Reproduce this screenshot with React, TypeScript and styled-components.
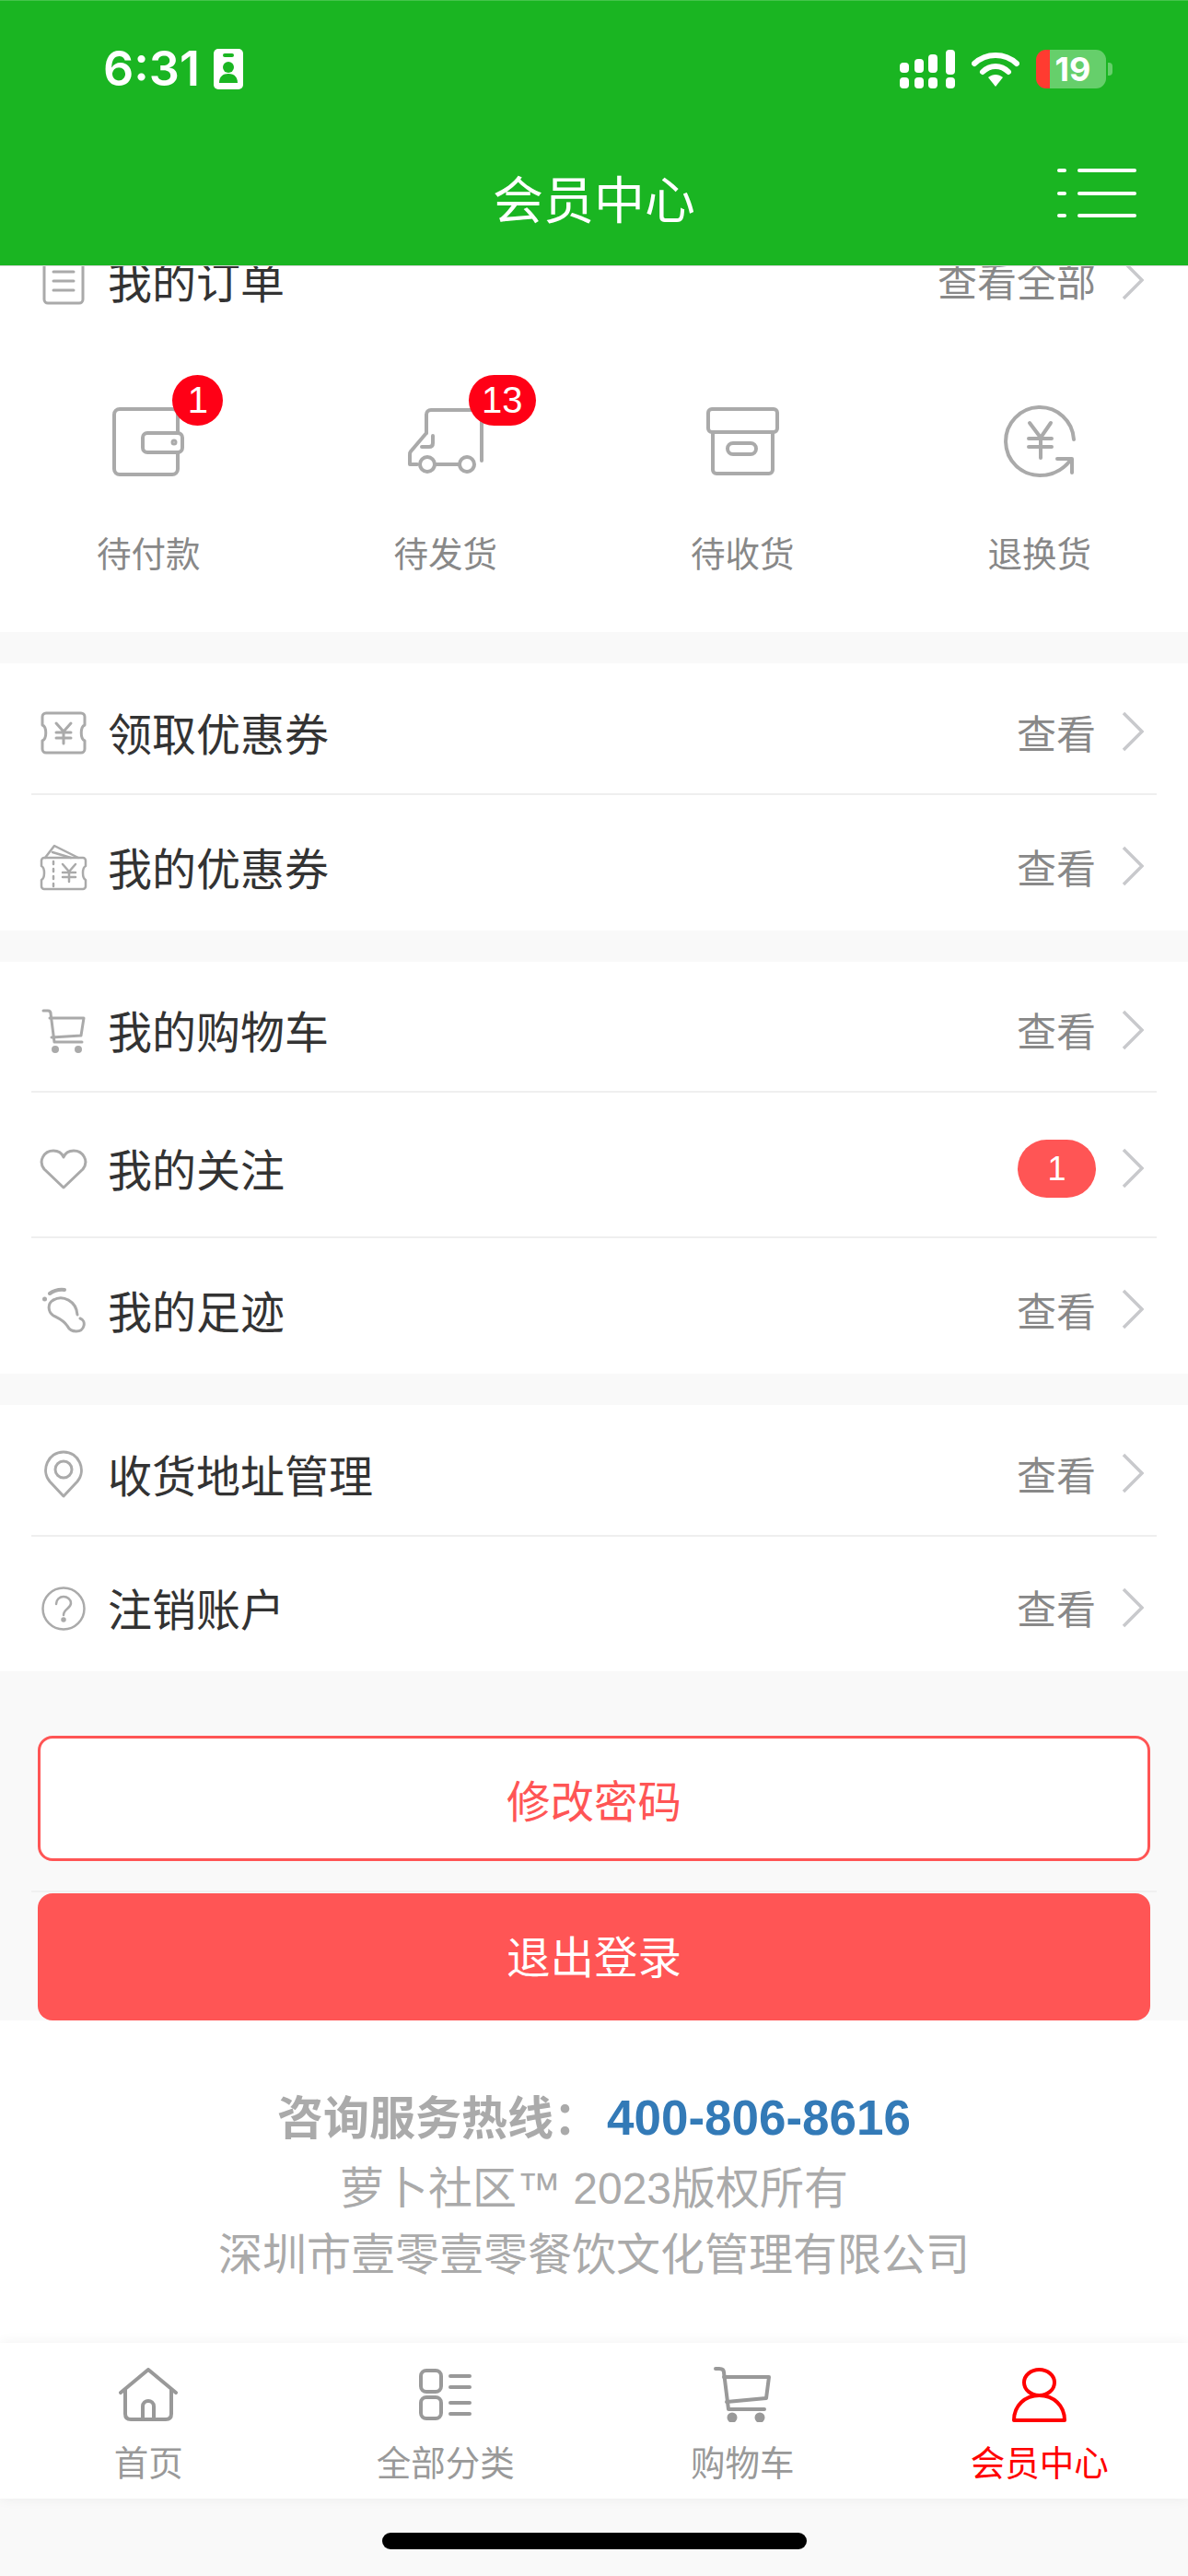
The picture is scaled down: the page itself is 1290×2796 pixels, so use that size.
import React from "react";
import styled, { createGlobalStyle } from "styled-components";

const GlobalStyle = createGlobalStyle`
    html, body {
        margin: 0;
        padding: 0;
        background: #f9f9f9;
    }
    * {
        box-sizing: border-box;
    }
    body {
        font-family: "Liberation Sans", "Noto Sans CJK SC", sans-serif;
    }
`;

const Page = styled.div`
    width: 1290px;
    height: 2796px;
    display: flex;
    flex-direction: column;
    overflow: hidden;
    background: #f9f9f9;
`;

const Header = styled.header`
    position: relative;
    z-index: 2;
    height: 289px;
    flex: none;
    background: #1ab522;
    border-top: 1px solid #45c44c;
    border-bottom: 1px solid #d8d8d8;
    color: #fff;
`;

const StatusBar = styled.div`
    height: 145px;
    padding: 52px 82px 0 112px;
    display: flex;
    align-items: flex-start;
    justify-content: space-between;
`;

const StatusLeft = styled.div`
    display: flex;
    align-items: center;
    gap: 15px;
    height: 44px;
`;

const Time = styled.span`
    font-family: Inter, sans-serif;
    font-weight: 600;
    font-size: 52px;
    line-height: 44px;
`;

const StatusRight = styled.div`
    display: flex;
    align-items: center;
    height: 44px;
    gap: 18px;
`;

const Battery = styled.div`
    width: 76px;
    height: 42px;
    border-radius: 11px;
    display: flex;
    align-items: center;
    justify-content: center;
    padding-left: 4px;
    font-family: Inter, sans-serif;
    font-weight: 700;
    font-size: 36px;
    background: linear-gradient(90deg, #ff3b30 0, #ff3b30 15px, #66cf6b 15px, #66cf6b 100%);
`;

const BatteryWrap = styled.div`
    display: flex;
    align-items: center;
    gap: 2px;
`;

const BatteryCap = styled.div`
    width: 5px;
    height: 14px;
    border-radius: 0 4px 4px 0;
    background: #66cf6b;
`;

const TitleBar = styled.div`
    height: 142px;
    padding: 0 56px;
    display: grid;
    grid-template-columns: 1fr auto 1fr;
    align-items: center;
`;

const Title = styled.h1`
    grid-column: 2;
    margin: 0;
    font-family: "Noto Sans CJK SC", sans-serif;
    font-weight: 400;
    font-size: 55px;
    line-height: 70px;
    margin-top: -8px;
`;

const MenuButton = styled.div`
    justify-self: end;
    display: flex;
    margin-top: -14px;
`;

const Main = styled.main`
    flex: 1;
    min-height: 0;
    display: flex;
    flex-direction: column;
`;

const Section = styled.section`
    background: #fff;
    padding: 0 34px;
    margin-bottom: 34px;
`;

const OrderSection = styled(Section)`
    margin-top: -60px;
`;

const RowWrap = styled.div<{ $h: number; $line?: boolean }>`
    height: ${(p) => p.$h}px;
    padding: 9px 14px 0 9px;
    display: flex;
    align-items: center;
    border-bottom: ${(p) => (p.$line ? "2px solid #efefef" : "none")};
`;

const RowIcon = styled.div`
    width: 52px;
    height: 52px;
    flex: none;
    display: flex;
    align-items: center;
    justify-content: center;
    margin-right: 22px;
`;

const RowLabel = styled.span`
    flex: 1;
    font-family: "Noto Sans CJK SC", sans-serif;
    font-size: 48px;
    line-height: 60px;
    color: #333;
    margin-top: -3px;
`;

const RowValue = styled.span`
    font-family: "Noto Sans CJK SC", sans-serif;
    font-size: 43px;
    line-height: 60px;
    color: #888;
    margin-top: -3px;
`;

const Pill = styled.span`
    width: 85px;
    height: 63px;
    border-radius: 32px;
    background: #ff5555;
    color: #fff;
    font-size: 36px;
    display: flex;
    align-items: center;
    justify-content: center;
`;

const Chevron = styled.svg`
    flex: none;
    margin-left: 28px;
    margin-top: -2px;
`;

const Tabs = styled.div`
    display: grid;
    grid-template-columns: repeat(4, 1fr);
    margin: 0 -34px;
    padding: 65px 0 62px;
`;

const Tab = styled.div`
    display: flex;
    flex-direction: column;
    align-items: center;
    gap: 52px;
`;

const TabIcon = styled.div`
    position: relative;
    height: 86px;
    display: flex;
    align-items: center;
    justify-content: center;
`;

const Badge = styled.span<{ $wide?: boolean }>`
    position: absolute;
    top: -29px;
    left: ${(p) => (p.$wide ? "66px" : "65px")};
    min-width: ${(p) => (p.$wide ? "73px" : "55px")};
    height: 55px;
    border-radius: 28px;
    background: #ff0016;
    color: #fff;
    font-size: 40px;
    display: flex;
    align-items: center;
    justify-content: center;
`;

const TabLabel = styled.span`
    font-family: "Noto Sans CJK SC", sans-serif;
    font-size: 37.5px;
    line-height: 50px;
    color: #888;
`;

const Actions = styled.div`
    flex: none;
    height: 379px;
    margin-top: -34px;
    padding: 70px 41px 0;
    display: flex;
    flex-direction: column;
`;

const OutlineButton = styled.div`
    height: 136px;
    border: 3px solid #ff5555;
    border-radius: 16px;
    background: #fff;
    color: #ff5555;
    font-family: "Noto Sans CJK SC", sans-serif;
    font-size: 47.5px;
    display: flex;
    align-items: center;
    justify-content: center;
`;

const ActionLine = styled.div`
    height: 2px;
    margin: 32px -7px 1px;
    background: #f0f0f0;
`;

const SolidButton = styled(OutlineButton)`
    height: 138px;
    border: none;
    padding-bottom: 6px;
    background: #ff5555;
    color: #fff;
`;

const Footer = styled.div`
    flex: 1;
    background: #fff;
    padding-top: 68px;
    text-align: center;
    color: #aaa;
    font-family: "Liberation Sans", "Noto Sans CJK SC", sans-serif;
    font-size: 48px;
`;

const Hotline = styled.div`
    font-family: "Noto Sans CJK SC", sans-serif;
    font-size: 50px;
    font-weight: 700;
    line-height: 68px;
    height: 68px;
    margin-bottom: 11px;
`;

const Phone = styled.span`
    font-family: "Liberation Sans", sans-serif;
    font-size: 53px;
    color: #337ab7;
    margin-left: 8px;
`;

const FooterLine = styled.div`
    line-height: 72px;
    height: 72px;
`;

const BottomNav = styled.nav`
    flex: none;
    height: 169px;
    background: #fff;
    display: grid;
    grid-template-columns: repeat(4, 1fr);
    box-shadow: 0 0 14px rgba(0, 0, 0, 0.06);
    padding-top: 25px;
`;

const NavItem = styled.div<{ $active?: boolean }>`
    display: flex;
    flex-direction: column;
    align-items: center;
    color: ${(p) => (p.$active ? "#ff0000" : "#999")};
`;

const NavIcon = styled.div`
    height: 62px;
    display: flex;
    align-items: center;
    justify-content: center;
`;

const NavLabel = styled.span`
    font-family: "Noto Sans CJK SC", sans-serif;
    font-size: 37.5px;
    line-height: 50px;
    margin-top: 16px;
`;

const HomeArea = styled.div`
    flex: none;
    height: 84px;
    padding-top: 37px;
    display: flex;
    justify-content: center;
`;

const HomeBar = styled.div`
    width: 461px;
    height: 18px;
    border-radius: 9px;
    background: #000;
`;

const gray = { fill: "none", stroke: "#aaa", strokeLinecap: "round", strokeLinejoin: "round" } as const;

const ContactIcon = () => (
    <svg width="32" height="44" viewBox="0 0 32 44">
        <rect width="32" height="44" rx="5" fill="#fff" />
        <rect x="10" y="5" width="12" height="4" rx="2" fill="#1ab522" />
        <circle cx="16" cy="20" r="6" fill="#1ab522" />
        <path d="M6 37c0-7 4-10 10-10s10 3 10 10z" fill="#1ab522" />
    </svg>
);

const SignalIcon = () => (
    <svg width="60" height="42" viewBox="0 0 60 42" fill="#fff">
        <rect x="0" y="14" width="10" height="11" rx="4" />
        <rect x="16" y="10" width="10" height="15" rx="4" />
        <rect x="31" y="5" width="10" height="20" rx="4" />
        <rect x="50" y="0" width="10" height="27" rx="4" />
        <rect x="0" y="30" width="10" height="12" rx="4" />
        <rect x="16" y="30" width="10" height="12" rx="4" />
        <rect x="31" y="30" width="10" height="12" rx="4" />
        <rect x="50" y="30" width="10" height="12" rx="4" />
    </svg>
);

const WifiIcon = () => (
    <svg width="52" height="38" viewBox="0 0 52 38">
        <path d="M3 13C16 1 36 1 49 13" fill="none" stroke="#fff" strokeWidth="6" strokeLinecap="round" />
        <path d="M12 22C20 14 32 14 40 22" fill="none" stroke="#fff" strokeWidth="6" strokeLinecap="round" />
        <path d="M18 28c5-4 11-4 16 0L26 38z" fill="#fff" />
    </svg>
);

const MenuIcon = () => (
    <svg width="86" height="54" viewBox="0 0 86 54" fill="#fff">
        <rect x="0" y="0" width="10" height="4" rx="2" />
        <rect x="22" y="0" width="64" height="4" rx="2" />
        <rect x="0" y="25" width="10" height="4" rx="2" />
        <rect x="22" y="25" width="64" height="4" rx="2" />
        <rect x="0" y="49" width="10" height="4" rx="2" />
        <rect x="22" y="49" width="64" height="4" rx="2" />
    </svg>
);

const ArrowRight = () => (
    <Chevron width="24" height="44" viewBox="0 0 24 44">
        <path d="M2 2l20 20L2 42" fill="none" stroke="#c8c9cc" strokeWidth="3.5" />
    </Chevron>
);

const OrderListIcon = () => (
    <svg width="46" height="52" viewBox="0 0 46 52" {...gray} strokeWidth="3">
        <rect x="2" y="2" width="42" height="48" rx="4" />
        <path d="M12 16h22M12 26h22M12 36h22" />
    </svg>
);

const TicketIcon = () => (
    <svg width="50" height="47" viewBox="0 0 50 47" {...gray} strokeWidth="3">
        <path d="M6 2h38a4 4 0 0 1 4 4v9c-5 2-5 15 0 17v9a4 4 0 0 1-4 4H6a4 4 0 0 1-4-4v-9c5-2 5-15 0-17V6a4 4 0 0 1 4-4z" />
        <path d="M17 13l8 9 8-9M25 22v13M17 23h16M17 29h16" />
    </svg>
);

const TicketsIcon = () => (
    <svg width="52" height="51" viewBox="0 0 52 51" {...gray} strokeWidth="2.5">
        <path d="M6 15L16 2l26 13" />
        <path d="M14 9l20 6" />
        <path d="M5 15h42a3 3 0 0 1 3 3v6c-4 2-4 13 0 15v7a3 3 0 0 1-3 3H5a3 3 0 0 1-3-3v-7c4-2 4-13 0-15v-6a3 3 0 0 1 3-3z" />
        <path d="M15 19v30" strokeDasharray="3 5" />
        <path d="M25 22l7 8 7-8M32 30v11M25 31h14M25 36h14" />
    </svg>
);

const CartIcon = () => (
    <svg width="48" height="48" viewBox="0 0 48 48" {...gray} strokeWidth="3">
        <path d="M2 2h5c2 0 3 1 3 3l4 31h30" />
        <path d="M9 10h37l-3 19-32 2" />
        <circle cx="15" cy="44" r="2.500" fill="#aaa" />
        <circle cx="40" cy="44" r="2.500" fill="#aaa" />
    </svg>
);

const HeartIcon = () => (
    <svg width="52" height="44" viewBox="0 0 52 44" {...gray} strokeWidth="3">
        <path d="M26 42L5 22C-2 13 5 2 15 2c5 0 9 2 11 7 2-5 6-7 11-7 10 0 17 11 10 20z" />
    </svg>
);

const FootIcon = () => (
    <svg width="48" height="50" viewBox="0 0 48 50" {...gray} strokeWidth="3">
        <path d="M9 7Q16 2 25 3" strokeWidth="4" />
        <circle cx="3.500" cy="13" r="2.500" fill="#aaa" stroke="none" />
        <path d="M13 14C6 18 7 27 13 31c6 3 11 5 15 11 4 8 16 8 18 0 1-4-1-7-4-8" />
        <path d="M13 14c10-6 25 1 26 16" />
    </svg>
);

const PinIcon = () => (
    <svg width="44" height="52" viewBox="0 0 44 52" {...gray} strokeWidth="3">
        <path d="M22 50L7 34C-3 22 5 2 22 2s25 20 15 32z" />
        <circle cx="22" cy="21" r="9" />
    </svg>
);

const QuestionIcon = () => (
    <svg width="48" height="48" viewBox="0 0 48 48" {...gray} strokeWidth="2.5">
        <circle cx="24" cy="24" r="22.500" />
        <path d="M16 19c0-5 4-8 8-8s8 3 8 7c0 6-8 6-8 13" />
        <circle cx="24" cy="36" r="1.500" fill="#aaa" />
    </svg>
);

const WalletIcon = () => (
    <svg width="78" height="75" viewBox="0 0 78 75" {...gray} strokeWidth="4">
        <rect x="2" y="2" width="69" height="71" rx="6" />
        <rect x="33" y="28" width="43" height="21" rx="5" fill="#fff" />
        <circle cx="67" cy="38" r="1.500" />
    </svg>
);

const TruckIcon = () => (
    <svg width="82" height="74" viewBox="0 0 82 74" {...gray} strokeWidth="4">
        <path d="M20 28V8c0-3 2-5 5-5h50c3 0 5 2 5 5v50" />
        <path d="M20 28L3 48c-1 1-1 2-1 4v10h8" />
        <path d="M27 31v8c0 2-1 4-4 4h-8" />
        <circle cx="21" cy="62" r="8" />
        <circle cx="64" cy="62" r="8" />
        <path d="M29 62h27" />
    </svg>
);

const BoxIcon = () => (
    <svg width="79" height="74" viewBox="0 0 79 74" {...gray} strokeWidth="4">
        <rect x="2" y="2" width="75" height="25" rx="4" />
        <path d="M7 27v41a4 4 0 0 0 4 4h57a4 4 0 0 0 4-4V27" />
        <rect x="23" y="39" width="31" height="12" rx="6" />
    </svg>
);

const ReturnIcon = () => (
    <svg width="78" height="80" viewBox="0 0 78 80" {...gray} strokeWidth="4">
        <path d="M76 38A37 37 0 1 0 39 77c13 0 25-6 33-16" />
        <path d="M58 59h16v15" />
        <path d="M28 20l12 16 11-16M40 36v22M27 37h25M27 46h25" />
    </svg>
);

const navStroke = { fill: "none", stroke: "#999", strokeWidth: 4, strokeLinecap: "round", strokeLinejoin: "round" } as const;

const HomeNavIcon = () => (
    <svg width="64" height="58" viewBox="0 0 64 58" {...navStroke}>
        <path d="M2 27L32 2l30 25" />
        <path d="M7 24v26c0 4 2 6 6 6h38c4 0 6-2 6-6V24" />
        <path d="M26 56V42c0-8 12-8 12 0v14" />
    </svg>
);

const GridNavIcon = () => (
    <svg width="57" height="56" viewBox="0 0 57 56" {...navStroke}>
        <rect x="2" y="2" width="22" height="23" rx="6" />
        <rect x="2" y="31" width="22" height="23" rx="6" />
        <path d="M34 8h21M34 20h21M34 37h21M34 49h21" />
    </svg>
);

const CartNavIcon = () => (
    <svg width="62" height="60" viewBox="0 0 62 60" {...navStroke}>
        <path d="M2 2h4c3 0 5 1 5 4l5 40h39" />
        <path d="M11 11h49l-3 23-43 4" />
        <circle cx="20" cy="55" r="3.500" fill="#999" />
        <circle cx="50" cy="55" r="3.500" fill="#999" />
    </svg>
);

const UserNavIcon = () => (
    <svg width="61" height="59" viewBox="0 0 61 59" fill="none" stroke="#ff0000" strokeWidth="4" strokeLinejoin="round">
        <ellipse cx="30.500" cy="16" rx="16.500" ry="14" />
        <path d="M3 57c0-16 12-27 27.500-27S58 41 58 57z" />
    </svg>
);

type RowData = { icon: React.ReactNode; label: string; h: number; line?: boolean; pill?: string };

const Row = ({ icon, label, h, line, pill }: RowData) => (
    <RowWrap $h={h} $line={line}>
        <RowIcon>{icon}</RowIcon>
        <RowLabel>{label}</RowLabel>
        {pill ? <Pill>{pill}</Pill> : <RowValue>查看</RowValue>}
        <ArrowRight />
    </RowWrap>
);

const groups: RowData[][] = [
    [
        { icon: <TicketIcon />, label: "领取优惠券", h: 143, line: true },
        { icon: <TicketsIcon />, label: "我的优惠券", h: 147 },
    ],
    [
        { icon: <CartIcon />, label: "我的购物车", h: 142, line: true },
        { icon: <HeartIcon />, label: "我的关注", h: 158, line: true, pill: "1" },
        { icon: <FootIcon />, label: "我的足迹", h: 147 },
    ],
    [
        { icon: <PinIcon />, label: "收货地址管理", h: 143, line: true },
        { icon: <QuestionIcon />, label: "注销账户", h: 146 },
    ],
];

const tabs = [
    { icon: <WalletIcon />, label: "待付款", badge: "1" },
    { icon: <TruckIcon />, label: "待发货", badge: "13" },
    { icon: <BoxIcon />, label: "待收货" },
    { icon: <ReturnIcon />, label: "退换货" },
];

const navItems = [
    { icon: <HomeNavIcon />, label: "首页" },
    { icon: <GridNavIcon />, label: "全部分类" },
    { icon: <CartNavIcon />, label: "购物车" },
    { icon: <UserNavIcon />, label: "会员中心", active: true },
];

function App() {
    return (
        <Page>
            <GlobalStyle />
            <Header>
                <StatusBar>
                    <StatusLeft>
                        <Time>6:31</Time>
                        <ContactIcon />
                    </StatusLeft>
                    <StatusRight>
                        <SignalIcon />
                        <WifiIcon />
                        <BatteryWrap>
                            <Battery>19</Battery>
                            <BatteryCap />
                        </BatteryWrap>
                    </StatusRight>
                </StatusBar>
                <TitleBar>
                    <Title>会员中心</Title>
                    <MenuButton>
                        <MenuIcon />
                    </MenuButton>
                </TitleBar>
            </Header>
            <Main>
                <OrderSection>
                    <RowWrap $h={142}>
                        <RowIcon>
                            <OrderListIcon />
                        </RowIcon>
                        <RowLabel>我的订单</RowLabel>
                        <RowValue>查看全部</RowValue>
                        <ArrowRight />
                    </RowWrap>
                    <Tabs>
                        {tabs.map((tab) => (
                            <Tab key={tab.label}>
                                <TabIcon>
                                    {tab.icon}
                                    {tab.badge && <Badge $wide={tab.badge.length > 1}>{tab.badge}</Badge>}
                                </TabIcon>
                                <TabLabel>{tab.label}</TabLabel>
                            </Tab>
                        ))}
                    </Tabs>
                </OrderSection>
                {groups.map((rows) => (
                    <Section key={rows[0].label}>
                        {rows.map((row) => (
                            <Row key={row.label} {...row} />
                        ))}
                    </Section>
                ))}
                <Actions>
                    <OutlineButton>修改密码</OutlineButton>
                    <ActionLine />
                    <SolidButton>退出登录</SolidButton>
                </Actions>
                <Footer>
                    <Hotline>
                        咨询服务热线：<Phone>400-806-8616</Phone>
                    </Hotline>
                    <FooterLine>萝卜社区™ 2023版权所有</FooterLine>
                    <FooterLine>深圳市壹零壹零餐饮文化管理有限公司</FooterLine>
                </Footer>
                <BottomNav>
                    {navItems.map((item) => (
                        <NavItem key={item.label} $active={item.active}>
                            <NavIcon>{item.icon}</NavIcon>
                            <NavLabel>{item.label}</NavLabel>
                        </NavItem>
                    ))}
                </BottomNav>
                <HomeArea>
                    <HomeBar />
                </HomeArea>
            </Main>
        </Page>
    );
}

export default App;
